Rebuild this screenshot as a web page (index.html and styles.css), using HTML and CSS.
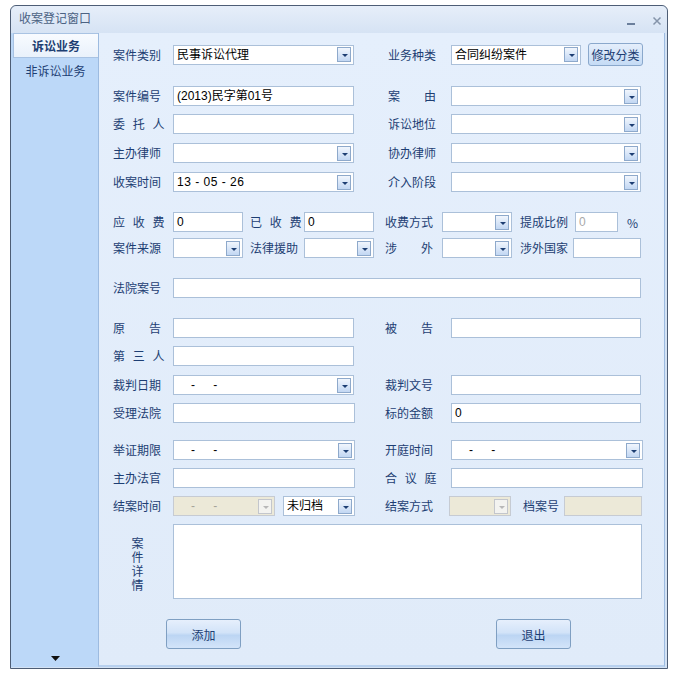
FILE: index.html
```html
<!DOCTYPE html>
<html lang="zh-CN">
  <head>
    <meta charset="UTF-8" />
    <meta name="viewport" content="width=device-width, initial-scale=1.0" />
    <title>收案登记窗口</title>
    <link rel="stylesheet" href="styles.css">
  </head>
  <body>
    <div class="window">
      <div class="titlebar">
        <span class="title">收案登记窗口</span>
        <div class="controls">
          <svg width="10" height="10" viewBox="0 0 10 10"><rect x="1" y="7" width="8" height="2" fill="#6b7f9c"/></svg>
          <svg width="10" height="10" viewBox="0 0 10 10"><path d="M1.5 1.5 L8.5 8.5 M8.5 1.5 L1.5 8.5" stroke="#8594aa" stroke-width="1.5"/></svg>
        </div>
      </div>
      <div class="frame">
        <div class="sidebar">
          <div class="tab active">诉讼业务</div>
          <div class="tab">非诉讼业务</div>
          <div class="more">
            <svg width="9" height="5" viewBox="0 0 9 5"><path d="M0 0 H9 L4.5 5 Z" fill="#111"/></svg>
          </div>
        </div>

        <div class="main">
          <div class="row first">
            <div class="label">案件类别</div>
            <div class="combo w181"><span>民事诉讼代理</span><i class="drop"></i></div>
            <div class="label right">业务种类</div>
            <div class="combo w130"><span>合同纠纷案件</span><i class="drop"></i></div>
            <button class="btn-small">修改分类</button>
          </div>

          <div class="row loose">
            <div class="label">案件编号</div>
            <div class="input w181">(2013)民字第01号</div>
            <div class="label right">案　　由</div>
            <div class="combo w190"><span></span><i class="drop"></i></div>
          </div>

          <div class="row">
            <div class="label spread">委 托 人</div>
            <div class="input w181"></div>
            <div class="label right">诉讼地位</div>
            <div class="combo w190"><span></span><i class="drop"></i></div>
          </div>

          <div class="row t9">
            <div class="label">主办律师</div>
            <div class="combo w181"><span></span><i class="drop"></i></div>
            <div class="label right">协办律师</div>
            <div class="combo w190"><span></span><i class="drop"></i></div>
          </div>

          <div class="row t9">
            <div class="label">收案时间</div>
            <div class="combo w181"><span class="stamp">13 - 05 - 26</span><i class="drop"></i></div>
            <div class="label right">介入阶段</div>
            <div class="combo w190"><span></span><i class="drop"></i></div>
          </div>

          <div class="row loose">
            <div class="label spread">应 收 费</div>
            <div class="input w70">0</div>
            <div class="label mid spread">已 收 费</div>
            <div class="input w70">0</div>
            <div class="label third">收费方式</div>
            <div class="combo w70"><span></span><i class="drop"></i></div>
            <div class="label fourth">提成比例</div>
            <div class="input w43 grey">0</div>
            <div class="pct">%</div>
          </div>

          <div class="row tight">
            <div class="label">案件来源</div>
            <div class="combo w70"><span></span><i class="drop"></i></div>
            <div class="label mid">法律援助</div>
            <div class="combo w70"><span></span><i class="drop"></i></div>
            <div class="label third">涉　　外</div>
            <div class="combo w70"><span></span><i class="drop"></i></div>
            <div class="label fourth short">涉外国家</div>
            <div class="input w68"></div>
          </div>

          <div class="row loose">
            <div class="label">法院案号</div>
            <div class="input w468"></div>
          </div>

          <div class="row loose">
            <div class="label">原　　告</div>
            <div class="input w181"></div>
            <div class="label right2">被　　告</div>
            <div class="input w190"></div>
          </div>

          <div class="row">
            <div class="label spread">第 三 人</div>
            <div class="input w181"></div>
          </div>

          <div class="row t9">
            <div class="label">裁判日期</div>
            <div class="combo w181"><span class="date">-　 -</span><i class="drop"></i></div>
            <div class="label right2">裁判文号</div>
            <div class="input w190"></div>
          </div>

          <div class="row">
            <div class="label">受理法院</div>
            <div class="input w182"></div>
            <div class="label right2b">标的金额</div>
            <div class="input w190">0</div>
          </div>

          <div class="row mid">
            <div class="label">举证期限</div>
            <div class="combo w182"><span class="date">-　 -</span><i class="drop"></i></div>
            <div class="label right3">开庭时间</div>
            <div class="combo w192"><span class="date">-　 -</span><i class="drop"></i></div>
          </div>

          <div class="row">
            <div class="label">主办法官</div>
            <div class="input w182"></div>
            <div class="label right3 spread">合 议 庭</div>
            <div class="input w192"></div>
          </div>

          <div class="row">
            <div class="label">结案时间</div>
            <div class="combo w102 disabled"><span class="date">-　 -</span><i class="drop"></i></div>
            <div class="combo w72 gap8"><span>未归档</span><i class="drop"></i></div>
            <div class="label close-way">结案方式</div>
            <div class="combo w62 disabled"><span></span><i class="drop"></i></div>
            <div class="label archive">档案号</div>
            <div class="input w78 disabled"></div>
          </div>

          <div class="row detail">
            <div class="label vertical"><span>案件详情</span></div>
            <div class="textarea"></div>
          </div>

          <div class="actions">
            <button class="btn add">添加</button>
            <button class="btn quit">退出</button>
          </div>
        </div>
      </div>
    </div>
  </body>
</html>
```

FILE: styles.css
```css
body {
  margin: 0;
  background: #ffffff;
  font-family: "Noto Sans CJK SC", "Liberation Sans", sans-serif;
  font-size: 12px;
}
.window {
  box-sizing: border-box;
  width: 658px;
  height: 664px;
  margin: 5px 0 0 10px;
  border: 1px solid #4d5d75;
  border-radius: 6px 6px 0 0;
  background: #d3e2f4;
  display: flex;
  flex-direction: column;
}
.titlebar {
  height: 27px;
  flex: none;
  display: flex;
  align-items: center;
  justify-content: space-between;
  padding: 0 5px 0 8px;
  border-radius: 6px 6px 0 0;
  background: linear-gradient(#e6eef9, #d6e3f4);
}
.title {
  color: #4b6283;
  font-size: 12px;
  margin-top: -4px;
}
.controls {
  display: flex;
  gap: 16px;
  margin-top: 2px;
}
.frame {
  flex: 1;
  display: flex;
  padding: 0 2px 1px 0;
  min-height: 0;
}
.sidebar {
  width: 87px;
  flex: none;
  background: #bcd8f8;
  display: flex;
  flex-direction: column;
}
.tab {
  height: 24px;
  line-height: 24px;
  margin-left: 2px;
  text-align: center;
  color: #1d3e73;
  font-size: 12px;
}
.tab.active {
  font-weight: bold;
  background: linear-gradient(#f8fbff, #e9f1fb);
  border: 1px solid #a9c3e3;
  border-right: none;
  height: 23px;
  line-height: 23px;
  margin-bottom: 1px;
}
.more {
  margin-top: auto;
  height: 20px;
  text-align: center;
  padding-left: 2px;
}
.main {
  flex: 1;
  box-sizing: border-box;
  background: linear-gradient(#e5effc, #e0ebf9);
  border-left: 1px solid #9dbbe0;
  border-right: 1px solid #9dbbe0;
  border-bottom: 2px solid #b7d0ee;
  padding: 10px 0 0 14px;
}
.row {
  display: flex;
  align-items: center;
  height: 20px;
  margin-top: 8px;
}
.row.first {
  height: 23px;
  margin-top: 0;
}
.row.loose { margin-top: 20px; }
.row.t9 { margin-top: 9px; }
.row.tight { margin-top: 6px; }
.row.mid { margin-top: 17px; }

.label {
  flex: none;
  width: 60px;
  color: #1d3e73;
  white-space: nowrap;
  line-height: 20px;
}
.label.spread { word-spacing: 5px; }
.label.right { width: 63px; margin-left: 34px; }
.label.right2 { width: 66px; margin-left: 31px; }
.label.right2b { width: 66px; margin-left: 30px; }
.label.right3 { width: 66px; margin-left: 30px; }
.label.mid { width: 54px; margin-left: 7px; }
.label.third { width: 57px; margin-left: 11px; }
.label.fourth { width: 55px; margin-left: 8px; }
.label.fourth.short { width: 53px; }
.label.close-way { width: 64px; margin-left: 30px; }
.label.archive { width: 41px; margin-left: 12px; }
.label.vertical {
  box-sizing: border-box;
  display: flex;
  align-items: center;
  padding: 6px 0 0 18px;
}
.label.vertical span {
  writing-mode: vertical-rl;
  letter-spacing: 2px;
  line-height: 12px;
}

.input,
.combo,
.textarea {
  box-sizing: border-box;
  height: 20px;
  flex: none;
  background: #ffffff;
  border: 1px solid #abc0d9;
  font-family: "Liberation Sans", "Noto Sans CJK SC", sans-serif;
  font-size: 12px;
  color: #000;
  line-height: 18px;
  padding-left: 3px;
  white-space: nowrap;
}
.combo {
  display: flex;
  align-items: center;
  justify-content: space-between;
  padding-right: 2px;
}
.combo span {
  overflow: hidden;
}
.combo span.stamp {
  letter-spacing: 0.5px;
}
.combo span.date {
  padding-left: 14px;
  letter-spacing: 1px;
}
.drop {
  box-sizing: border-box;
  width: 14px;
  height: 15px;
  flex: none;
  border: 1px solid #8ea9cb;
  background: linear-gradient(#f1f6fd, #c2d7f3);
  position: relative;
}
.drop::after {
  content: "";
  position: absolute;
  left: 4px;
  top: 6px;
  border-left: 3px solid transparent;
  border-right: 3px solid transparent;
  border-top: 3px solid #1d3e73;
}
.combo.disabled,
.input.disabled {
  background: #ece9d8;
  border-color: #c6cbd3;
  color: #a5a39a;
}
.combo.disabled .drop {
  background: #f3f3f0;
  border-color: #c3c6cc;
}
.combo.disabled .drop::after {
  border-top-color: #b8b8b8;
}
.input.grey { color: #a9a9a9; }
.pct {
  flex: 1;
  color: #1d3e73;
  padding-left: 9px;
}
.gap8 { margin-left: 8px; }

.w43 { width: 43px; }
.w62 { width: 62px; }
.w68 { width: 68px; }
.w70 { width: 70px; }
.w72 { width: 72px; }
.w78 { width: 78px; }
.w102 { width: 102px; }
.w130 { width: 130px; }
.w181 { width: 181px; }
.w182 { width: 182px; }
.w190 { width: 190px; }
.w192 { width: 192px; }
.w468 { width: 468px; }

.row.detail {
  height: 75px;
  align-items: stretch;
}
.textarea {
  width: 469px;
  height: 75px;
}

.btn-small {
  box-sizing: border-box;
  width: 55px;
  height: 23px;
  margin-left: 7px;
  padding: 0;
  border: 1px solid #8aa8cc;
  border-radius: 3px;
  background: linear-gradient(#e4eefb, #c5dbf5);
  color: #1d3e73;
  font-family: "Noto Sans CJK SC", sans-serif;
  font-size: 12px;
  cursor: pointer;
}
.actions {
  display: flex;
  margin-top: 20px;
  padding-left: 53px;
}
.btn {
  box-sizing: border-box;
  width: 75px;
  height: 30px;
  padding: 0;
  border: 1px solid #7f9fc2;
  border-radius: 3px;
  background: linear-gradient(#e6effc 0%, #d2e3f8 45%, #bcd5f3 55%, #d3e4f9 100%);
  color: #1d3e73;
  font-family: "Noto Sans CJK SC", sans-serif;
  font-size: 12px;
  cursor: pointer;
}
.btn.quit { margin-left: 255px; }
```
